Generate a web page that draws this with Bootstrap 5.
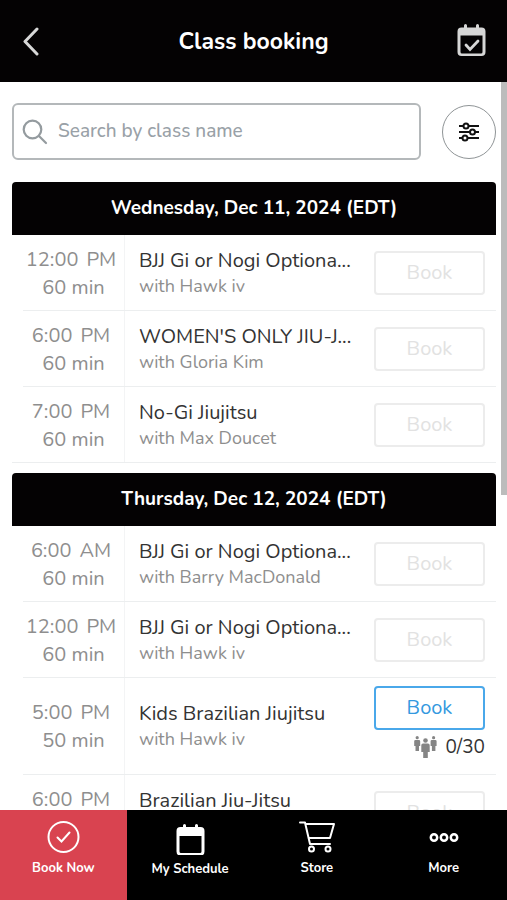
<!DOCTYPE html>
<html lang="en">
<head>
<meta charset="utf-8">
<meta name="viewport" content="width=device-width, initial-scale=1">
<title>Class booking</title>
<link href="https://cdn.jsdelivr.net/npm/bootstrap@5.3.0/dist/css/bootstrap.min.css" rel="stylesheet">
<style>
body { font-family: Nunito, Lato, "Open Sans", sans-serif; font-size: 20px; color: #333; background: #fff; }
svg { display: block; }
.top-bar { background: #040203; height: 82px; padding: 0 20px; }
.top-bar h1 { font-size: 23px; font-weight: 700; line-height: 28px; padding-top: 1px; }
.icon-btn { background: none; border: 0; padding: 0; }
.content { padding: 21px 11px 0 12px; min-height: 0; }
.search-row { gap: 21px; margin-bottom: 22px; }
.search-box { border: 2px solid #b4b8ba; border-radius: 6px; height: 57px; padding: 0 8px; gap: 10px; }
.search-box input { font-size: 19px; font-weight: 500; border: 0; outline: 0; padding: 0; color: #333; background: none; min-width: 0; }
.search-box input::placeholder { color: #99a1a7; opacity: 1; }
.filter-btn { width: 54px; height: 54px; border: 1px solid #8f9496; background: #fff; }
.day { margin-bottom: 10px; }
.day h2 { background: #040203; height: 53px; border-radius: 4px 4px 0 0; font-size: 19px; font-weight: 700; }
.slot { margin-left: 11px; min-height: 76px; border-bottom: 1px solid #eceeef; padding-right: 11px; }
.slot:last-child { margin-left: 0; }
.slot:last-child .when { width: 113px; padding-left: 11px; }
.when { width: 102px; border-right: 1px solid #f3f4f5; color: #8e8e8e; line-height: 28px; padding-top: 2px; }
.half { margin: 0 5px 0 8px; }
.what { padding-left: 14px; line-height: 26px; min-width: 0; }
.coach { font-size: 18px; line-height: 24px; color: #8e8e8e; }
.act { width: 111px; }
.book-btn { height: 44px; border: 2px solid #ececec; border-radius: 4px; background: #fff; color: #e2e2e2; line-height: 28px; padding: 0; }
.book-btn.open { border-color: #4aa8ea; color: #3499df; }
.act.with-spots { padding: 8px 0 13px; }
.spots { gap: 8px; font-size: 19px; line-height: 28px; margin-top: 3px; }
.thumb-bar { top: 82px; right: 0; width: 6px; height: 413px; background: #bcbcbc; }
.tabs { height: 90px; background: #000; font-size: 13px; font-weight: 700; line-height: 18px; }
.tabs a { color: #fff; padding-top: 10px; gap: 5px; }
.tabs a.current { background: #d94350; }
</style>
<script src="https://cdn.jsdelivr.net/npm/bootstrap@5.3.0/dist/js/bootstrap.bundle.min.js"></script>
</head>
<body class="vh-100 d-flex flex-column overflow-hidden position-relative">
<header class="top-bar d-flex align-items-center justify-content-between flex-shrink-0 text-white">
  <button class="icon-btn" type="button" aria-label="Back"><svg width="31" height="30" viewBox="0 0 31 30" fill="none" stroke="#d8d8d8" stroke-width="3" stroke-linecap="round" stroke-linejoin="round"><path d="M17 3 5 15.500 17 28"/></svg></button>
  <h1 class="m-0">Class booking</h1>
  <button class="icon-btn" type="button" aria-label="My bookings"><svg width="31" height="34" viewBox="0 0 31 34"><path fill="#d6d6d6" fill-rule="evenodd" d="M5.500 3.500H8V1.500a1.500 1.500 0 0 1 3 0v2h9v-2a1.500 1.500 0 0 1 3 0v2h2.500a4 4 0 0 1 4 4V28a4 4 0 0 1-4 4h-20a4 4 0 0 1-4-4V7.500a4 4 0 0 1 4-4ZM4.500 11.500V28q0 1.500 1.500 1.500h19q1.500 0 1.500-1.500V11.500Z"/><path d="m10 21 4 4.500 8-8.500" fill="none" stroke="#d6d6d6" stroke-width="2.800" stroke-linecap="round"/></svg></button>
</header>
<main class="content flex-grow-1 overflow-hidden">
  <div class="search-row d-flex align-items-center">
    <label class="search-box d-flex align-items-center flex-grow-1">
      <svg width="26" height="26" viewBox="0 0 26 26" fill="none" stroke="#949b9f" stroke-width="2.200" stroke-linecap="round"><circle cx="10.500" cy="10.500" r="8.800"/><path d="m17 17 7 7"/></svg>
      <input type="text" class="flex-grow-1" placeholder="Search by class name" aria-label="Search by class name">
    </label>
    <button class="filter-btn rounded-circle d-flex align-items-center justify-content-center p-0" type="button" aria-label="Filters"><svg width="22" height="20" viewBox="0 0 22 20" fill="none" stroke="#111" stroke-width="2"><path d="M1 4h4.500m5 0H21M1 10h10.500m5 0H21M1 16h3.500m5 0H21"/><circle cx="8" cy="4" r="2.500"/><circle cx="14.500" cy="10" r="2.500"/><circle cx="7" cy="16" r="2.500"/></svg></button>
  </div>

  <section class="day">
    <h2 class="m-0 text-white d-flex align-items-center justify-content-center">Wednesday, Dec 11, 2024 (EDT)</h2>
    <div>
      <article class="slot d-flex">
        <div class="when d-flex flex-column justify-content-center text-center flex-shrink-0"><div>12:00<span class="half">PM</span></div><div>60 min</div></div>
        <div class="what flex-grow-1 align-self-center"><div class="text-nowrap">BJJ Gi or Nogi Optiona...</div><div class="coach">with Hawk iv</div></div>
        <div class="act flex-shrink-0 align-self-center"><button class="book-btn w-100" type="button" disabled>Book</button></div>
      </article>
      <article class="slot d-flex">
        <div class="when d-flex flex-column justify-content-center text-center flex-shrink-0"><div>6:00<span class="half">PM</span></div><div>60 min</div></div>
        <div class="what flex-grow-1 align-self-center"><div class="text-nowrap">WOMEN'S ONLY JIU-J...</div><div class="coach">with Gloria Kim</div></div>
        <div class="act flex-shrink-0 align-self-center"><button class="book-btn w-100" type="button" disabled>Book</button></div>
      </article>
      <article class="slot d-flex">
        <div class="when d-flex flex-column justify-content-center text-center flex-shrink-0"><div>7:00<span class="half">PM</span></div><div>60 min</div></div>
        <div class="what flex-grow-1 align-self-center"><div class="text-nowrap">No-Gi Jiujitsu</div><div class="coach">with Max Doucet</div></div>
        <div class="act flex-shrink-0 align-self-center"><button class="book-btn w-100" type="button" disabled>Book</button></div>
      </article>
    </div>
  </section>

  <section class="day">
    <h2 class="m-0 text-white d-flex align-items-center justify-content-center">Thursday, Dec 12, 2024 (EDT)</h2>
    <div>
      <article class="slot d-flex">
        <div class="when d-flex flex-column justify-content-center text-center flex-shrink-0"><div>6:00<span class="half">AM</span></div><div>60 min</div></div>
        <div class="what flex-grow-1 align-self-center"><div class="text-nowrap">BJJ Gi or Nogi Optiona...</div><div class="coach">with Barry MacDonald</div></div>
        <div class="act flex-shrink-0 align-self-center"><button class="book-btn w-100" type="button" disabled>Book</button></div>
      </article>
      <article class="slot d-flex">
        <div class="when d-flex flex-column justify-content-center text-center flex-shrink-0"><div>12:00<span class="half">PM</span></div><div>60 min</div></div>
        <div class="what flex-grow-1 align-self-center"><div class="text-nowrap">BJJ Gi or Nogi Optiona...</div><div class="coach">with Hawk iv</div></div>
        <div class="act flex-shrink-0 align-self-center"><button class="book-btn w-100" type="button" disabled>Book</button></div>
      </article>
      <article class="slot d-flex">
        <div class="when d-flex flex-column justify-content-center text-center flex-shrink-0"><div>5:00<span class="half">PM</span></div><div>50 min</div></div>
        <div class="what flex-grow-1 align-self-center"><div class="text-nowrap">Kids Brazilian Jiujitsu</div><div class="coach">with Hawk iv</div></div>
        <div class="act with-spots flex-shrink-0">
          <button class="book-btn open w-100" type="button">Book</button>
          <div class="spots d-flex align-items-center justify-content-end">
            <svg width="23" height="24" viewBox="0 0 23 24" fill="#858585"><g id="person"><circle cx="3.200" cy="2.700" r="1.600"/><path d="M1.500 5h3.400q1.300 0 1.300 1.300V11H5v5H1.500v-5H.200V6.300Q.200 5 1.500 5Z"/></g><use href="#person" x="16.400"/><circle cx="11.500" cy="5.500" r="2.300"/><path d="M9 8.500h5q1.700 0 1.700 1.700V17h-1.900v6H9.200v-6H7.300v-6.800Q7.300 8.500 9 8.500Z"/></svg>
            <span>0/30</span>
          </div>
        </div>
      </article>
      <article class="slot d-flex">
        <div class="when d-flex flex-column justify-content-center text-center flex-shrink-0"><div>6:00<span class="half">PM</span></div><div>60 min</div></div>
        <div class="what flex-grow-1 align-self-center"><div class="text-nowrap">Brazilian Jiu-Jitsu</div><div class="coach">with Hawk iv</div></div>
        <div class="act flex-shrink-0 align-self-center"><button class="book-btn w-100" type="button" disabled>Book</button></div>
      </article>
    </div>
  </section>
</main>
<div class="thumb-bar position-absolute"></div>
<nav class="tabs row g-0 flex-shrink-0 text-center">
  <a href="#" class="current col d-flex flex-column align-items-center text-decoration-none" aria-current="page"><svg width="34" height="34" viewBox="0 0 34 34" fill="none" stroke="#fff" stroke-width="2"><circle cx="17.500" cy="17" r="15"/><path d="m11.500 17.500 4 4 8-9" stroke-linecap="round"/></svg>Book Now</a>
  <a href="#" class="col d-flex flex-column align-items-center text-decoration-none"><svg width="30" height="35" viewBox="0 0 30 35" fill="#fff"><path fill-rule="evenodd" d="M5.500 7H8V5.500a1.500 1.500 0 0 1 3 0V7h9V5.500a1.500 1.500 0 0 1 3 0V7h2.500a4 4 0 0 1 4 4v20.500a4 4 0 0 1-4 4h-20a4 4 0 0 1-4-4V11a4 4 0 0 1 4-4Zm-1 9v15.500q0 1.500 1.500 1.500h19q1.500 0 1.500-1.500V16Z"/></svg>My Schedule</a>
  <a href="#" class="col d-flex flex-column align-items-center text-decoration-none"><svg width="36" height="34" viewBox="0 0 36 34" fill="none" stroke="#fff" stroke-width="2" stroke-linecap="round" stroke-linejoin="round"><path d="M1 2.500h5l5 21.500h20M6.500 4H35l-4 14H9.500"/><circle cx="12.500" cy="29" r="2.500"/><circle cx="29" cy="29" r="2.500"/></svg>Store</a>
  <a href="#" class="col d-flex flex-column align-items-center text-decoration-none"><svg width="30" height="34" viewBox="0 0 30 34" fill="none" stroke="#fff" stroke-width="2.500"><circle cx="5" cy="17.500" r="3.200"/><circle cx="15" cy="17.500" r="3.200"/><circle cx="25" cy="17.500" r="3.200"/></svg>More</a>
</nav>
</body>
</html>
